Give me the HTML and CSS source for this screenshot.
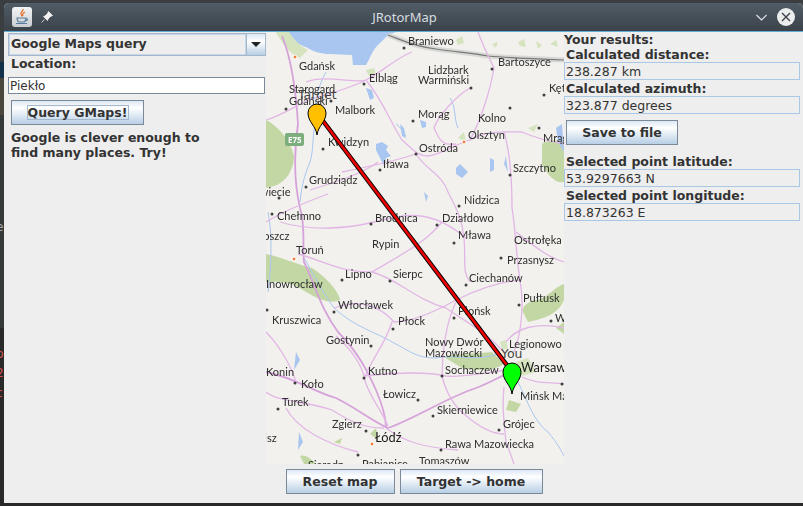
FILE: index.html
```html
<!DOCTYPE html>
<html lang="pl">
<head>
    <meta charset="UTF-8">
    <meta name="viewport" content="width=device-width, initial-scale=1.0">
    <title>JRotorMap</title>
    <link rel="stylesheet" href="styles.css">
</head>
<body>
    <div class="backdrop-text">
        <span>e</span>
        <span class="red">p</span>
        <span class="red">2</span>
        <span class="red">c</span>
    </div>
    <div class="window">
        <header class="titlebar">
            <div class="title-left">
                <span class="app-icon">
                    <svg width="20" height="20" viewBox="0 0 20 20">
                        <path d="M11 2c1 2-3 3-2 5 .5 1 1 1.500 1 2.500M13 5c-2 1-3 2-2 4" fill="none" stroke="#e2702a" stroke-width="1.300"/>
                        <path d="M5 11h9c0 2-1 3.500-2 4H7c-1-.5-2-2-2-4zM14 11.500c2 0 2 2.500-.5 2.500" fill="none" stroke="#5a7f9e" stroke-width="1.200"/>
                        <path d="M4 16.500h11" stroke="#5a7f9e" stroke-width="1.200"/>
                    </svg>
                </span>
                <svg class="pin-icon" width="12" height="12" viewBox="0 0 12 12">
                    <path d="M7.500 .5l4 4-2 1-2.500 2.500-.5 1.500-4-4 1.500-.5 2.500-2.500zM3.500 8.500L.5 11.500" fill="#f2f2f2" stroke="#f2f2f2" stroke-width=".8"/>
                </svg>
            </div>
            <div class="title-text">JRotorMap</div>
            <div class="title-right">
                <svg width="11" height="7" viewBox="0 0 11 7">
                    <path d="M.5 1l5 5 5-5" fill="none" stroke="#e6e9eb" stroke-width="1.100"/>
                </svg>
                <span class="close-btn">
                    <svg width="18" height="18" viewBox="0 0 18 18">
                        <circle cx="9" cy="9" r="9" fill="#eceded"/>
                        <path d="M5 5l8 8M13 5l-8 8" stroke="#3d444a" stroke-width="1.400"/>
                    </svg>
                </span>
            </div>
        </header>

        <main class="content">
            <section class="left-panel">
                <div class="combo">
                    <div class="combo-value">Google Maps query</div>
                    <div class="combo-arrow"><span class="arrow-down"></span></div>
                </div>
                <div class="location-label">Location:</div>
                <input class="location-input" type="text" value="Piekło">
                <button class="btn btn-query"><span class="focus-box">Query GMaps!</span></button>
                <p class="hint">Google is clever enough to<br>find many places. Try!</p>
            </section>

            <section class="map-panel">
                <div class="map">
                    <svg width="298" height="432" viewBox="0 0 298 432">
                        <g class="base">
                            <!-- areas -->
                            <path class="forest-light" d="M10 0L24 0C28 8 34 14 42 18L34 26C24 22 16 12 10 0Z"/>
                            <path class="water" d="M23 0C28 8 34 14 40 15C48 20 56 22 63 22L86 23L87 33L100 33C104 26 106 20 110 15L122 3L130 0Z"/>
                            <path class="forest" d="M0 88C12 94 24 108 28 124C28 138 20 150 8 154L0 156Z"/>
                            <path class="forest" d="M0 222C18 226 30 232 46 236C62 246 74 262 74 268C60 274 44 262 30 254C16 248 8 250 0 250Z"/>
                            <path class="forest" d="M178 325C192 320 212 322 226 320L238 332C226 340 210 338 196 336Z"/>
                            <path class="forest" d="M256 278C262 266 272 270 280 264C288 258 292 254 298 252V268C292 282 280 286 262 290Z"/>
                            <path class="forest" d="M276 112C284 106 294 108 298 112V150C290 152 282 144 276 132Z"/>
                            <path class="forest" d="M290 296L298 290V302Z"/>
                            <path class="forest" d="M243 368L255 372L250 380L240 378Z"/>
                            <path class="forest" d="M34 424C40 422 46 428 50 432H38Z"/>
                            <path class="forest" d="M68 410L76 406L74 412Z"/>
                            <path class="forest" d="M104 402L110 396L112 408Z"/>
                            <path class="forest-light" d="M226 12L232 10L230 16ZM252 10L258 7L260 15L254 14ZM270 9L276 13L272 17ZM284 12L290 8L292 15Z"/>
                            <path class="forest-light" d="M190 8L196 4L198 11L192 13ZM100 38L108 36L110 42L103 44Z"/>
                            <path class="forest-light" d="M192 106L198 100L200 110ZM262 96L272 92L268 100Z"/>
                            <path class="forest-light" d="M234 310L240 308L242 316L236 318ZM250 330L262 326L270 340L256 344Z"/>

                            <!-- border -->
                            <path class="border-wide" d="M122 3C136 8 146 14 170 17C190 20 205 21 222 24C245 26 270 27 298 28"/>
                            <path class="border-line" d="M122 3C136 8 146 14 170 17C190 20 205 21 222 24C245 26 270 27 298 28"/>

                            <!-- rivers and lakes -->
                            <path class="river" d="M60 40C52 54 48 70 50 90C46 100 48 118 44 130C40 140 36 150 34 170M2 180C6 200 6 230 2 260"/>
                            <path class="river" d="M36 222C46 240 56 260 68 276C90 296 110 300 126 310C146 320 150 326 170 326C190 322 208 330 232 322"/>
                            <path class="river" d="M252 350C262 370 268 390 282 400C292 412 296 420 298 424"/>
                            <path class="river" d="M184 66C190 74 188 88 192 96M130 92C136 96 136 100 140 104"/>
                            <path class="lake" d="M110 112L116 110L122 114L120 118L125 124L120 126L118 134L114 126L110 118Z"/>
                            <path class="lake" d="M100 56L106 58L108 66L104 68Z"/>
                            <path class="lake" d="M134 92L138 96L140 106L136 104Z"/>
                            <path class="lake" d="M154 88L160 90L160 95L156 96Z"/>
                            <path class="lake" d="M190 136L194 132L198 136L202 140L196 146L190 142Z"/>
                            <path class="lake" d="M224 126L228 128L228 138L224 140Z"/>
                            <path class="lake" d="M238 132L240 124L242 140Z"/>
                            <path class="lake" d="M158 160L162 164L160 170Z"/>
                            <path class="lake" d="M30 320L34 328L28 338Z"/>
                            <path class="lake" d="M33 400L37 410L32 418Z"/>
                            <path class="lake" d="M290 96L296 92L298 120L292 110Z"/>

                            <!-- roads -->
                            <path class="road-main" d="M16 4C26 28 30 60 32 92C28 120 28 150 34 176C40 196 36 214 38 230C50 254 54 276 72 300C92 320 102 340 110 358C116 372 120 386 120 396"/>
                            <path class="road-main" d="M0 340C30 346 48 360 70 366C90 376 108 390 122 396C150 386 180 366 210 356C226 350 238 342 246 340"/>
                            <path class="road" d="M0 88C14 84 26 76 42 68C62 62 80 58 100 48C116 40 130 26 146 20"/>
                            <path class="road" d="M40 50C60 42 90 52 100 48"/>
                            <path class="road" d="M100 48C118 70 124 90 136 108C146 116 150 124 162 124C176 122 190 112 204 108C214 90 224 60 228 36C222 24 218 16 212 0"/>
                            <path class="road" d="M204 56C190 64 172 84 168 96C174 110 178 114 190 112"/>
                            <path class="road" d="M150 122C160 138 176 142 182 160C190 176 196 186 198 206C200 230 196 240 204 250"/>
                            <path class="road" d="M204 108C220 98 242 100 256 100C274 108 288 110 298 112"/>
                            <path class="road" d="M238 100C244 120 246 150 246 176C250 200 250 224 254 248C258 270 256 300 248 320"/>
                            <path class="road" d="M76 140C96 136 126 130 150 122"/>
                            <path class="road" d="M44 158C70 150 96 142 112 130"/>
                            <path class="road" d="M0 190C20 178 40 170 62 162"/>
                            <path class="road" d="M14 190C46 200 84 196 108 190C140 182 164 176 200 206"/>
                            <path class="road" d="M176 190C160 210 140 220 106 240M250 200C270 216 284 226 298 230"/>
                            <path class="road" d="M32 222C56 228 72 240 106 240C130 246 150 268 180 276C200 290 220 300 238 320"/>
                            <path class="road" d="M68 276C90 268 110 270 128 290C146 290 172 278 190 268C210 258 230 250 254 248"/>
                            <path class="road" d="M126 290C120 310 108 324 98 346C104 366 112 372 122 394"/>
                            <path class="road" d="M70 304C86 318 94 330 98 344C130 340 164 340 180 344C200 346 224 340 240 338"/>
                            <path class="road" d="M176 344C180 360 186 372 198 382C214 396 226 402 238 402"/>
                            <path class="road" d="M0 360C12 370 36 368 66 378C82 388 96 396 118 396"/>
                            <path class="road" d="M0 300C10 310 24 330 30 350M20 376C30 396 60 412 92 420"/>
                            <path class="road" d="M190 270C180 290 176 320 176 344"/>
                            <path class="road" d="M238 355C236 376 238 390 240 410C244 420 246 426 248 432"/>
                            <path class="road" d="M120 396C138 410 160 416 192 418"/>
                            <path class="road" d="M256 345C270 352 284 350 298 352M240 310C250 296 270 290 298 296"/>

                            <!-- city dots -->
                            <g class="dots">
                                <circle cx="138" cy="16" r="1.500"/><circle cx="98" cy="52" r="1.500"/><circle cx="20" cy="77" r="1.500"/>
                                <circle cx="65" cy="69" r="1.500"/><circle cx="226" cy="37" r="1.500"/><circle cx="205" cy="56" r="1.500"/>
                                <circle cx="278" cy="63" r="1.500"/><circle cx="244" cy="76" r="1.500"/><circle cx="147" cy="89" r="1.500"/>
                                <circle cx="273" cy="96" r="1.500"/><circle cx="57" cy="117" r="1.500"/><circle cx="150" cy="122" r="1.500"/>
                                <circle cx="114" cy="138" r="1.500"/><circle cx="244" cy="143" r="1.500"/><circle cx="40" cy="155" r="1.500"/>
                                <circle cx="13" cy="166" r="1.500"/><circle cx="6" cy="182" r="1.500"/><circle cx="105" cy="192" r="1.500"/>
                                <circle cx="171" cy="193" r="1.500"/><circle cx="193" cy="174" r="1.500"/><circle cx="188" cy="211" r="1.500"/>
                                <circle cx="235" cy="226" r="1.500"/><circle cx="76" cy="248" r="1.500"/><circle cx="124" cy="249" r="1.500"/>
                                <circle cx="200" cy="253" r="1.500"/><circle cx="253" cy="273" r="1.500"/><circle cx="68" cy="280" r="1.500"/>
                                <circle cx="188" cy="286" r="1.500"/><circle cx="285" cy="289" r="1.500"/><circle cx="127" cy="297" r="1.500"/>
                                <circle cx="105" cy="314" r="1.500"/><circle cx="98" cy="346" r="1.500"/><circle cx="176" cy="344" r="1.500"/>
                                <circle cx="29" cy="351" r="1.500"/><circle cx="152" cy="368" r="1.500"/><circle cx="12" cy="377" r="1.500"/>
                                <circle cx="167" cy="384" r="1.500"/><circle cx="100" cy="399" r="1.500"/><circle cx="233" cy="398" r="1.500"/>
                                <circle cx="175" cy="418" r="1.500"/><circle cx="92" cy="423" r="1.500"/><circle cx="296" cy="352" r="1.500"/>
                                <circle cx="1" cy="278" r="1.500"/>
                            </g>
                            <circle class="capital" cx="29" cy="25" r="2"/>
                            <circle class="capital" cx="198" cy="110" r="2"/>
                            <circle class="capital" cx="28" cy="227" r="2"/>
                            <circle class="capital" cx="106" cy="412" r="2"/>

                            <!-- motorway sign -->
                            <rect class="sign" x="19" y="101" width="19" height="13" rx="2"/>
                            <text class="sign-text" x="22" y="111">E75</text>

                            <!-- place names -->
                            <g class="place">
                                <text x="142" y="13">Braniewo</text><text x="33" y="38">Gdańsk</text><text x="103" y="50">Elbląg</text>
                                <text x="162" y="42">Lidzbark</text><text x="152" y="52">Warmiński</text><text x="232" y="34">Bartoszyce</text>
                                <text x="283" y="60">Kętrzyn</text><text x="23" y="61">Starogard</text><text x="23" y="73">Gdański</text>
                                <text x="69" y="82">Malbork</text><text x="152" y="86">Morąg</text><text x="212" y="90">Kolno</text>
                                <text x="202" y="107">Olsztyn</text><text x="277" y="110">Mrągowo</text><text x="62" y="114">Kwidzyn</text>
                                <text x="153" y="120">Ostróda</text><text x="117" y="136">Iława</text><text x="247" y="140">Szczytno</text>
                                <text x="43" y="152">Grudziądz</text><text x="198" y="172">Nidzica</text><text x="-12" y="164">Świecie</text>
                                <text x="11" y="188">Chełmno</text><text x="109" y="190">Brodnica</text><text x="176" y="190">Działdowo</text>
                                <text x="192" y="207">Mława</text><text x="-27" y="208">Bydgoszcz</text><text x="248" y="212">Ostrołęka</text>
                                <text x="106" y="216">Rypin</text><text x="30" y="222">Toruń</text><text x="241" y="232">Przasnysz</text>
                                <text x="79" y="246">Lipno</text><text x="127" y="246">Sierpc</text><text x="203" y="250">Ciechanów</text>
                                <text x="0" y="256">Inowrocław</text><text x="257" y="270">Pułtusk</text><text x="72" y="277">Włocławek</text>
                                <text x="192" y="283">Płońsk</text><text x="289" y="290">Wyszków</text><text x="6" y="292">Kruszwica</text>
                                <text x="132" y="293">Płock</text><text x="60" y="312">Gostynin</text><text x="243" y="316">Legionowo</text>
                                <text x="159" y="314">Nowy Dwór</text><text x="159" y="325">Mazowiecki</text><text x="179" y="342">Sochaczew</text>
                                <text x="102" y="343">Kutno</text><text x="0" y="344">Konin</text><text x="35" y="356">Koło</text>
                                <text x="254" y="368">Mińsk Mazowiecki</text><text x="117" y="366">Łowicz</text><text x="16" y="374">Turek</text>
                                <text x="171" y="382">Skierniewice</text><text x="66" y="396">Zgierz</text><text x="237" y="396">Grójec</text>
                                <text x="-17" y="410">Kalisz</text><text x="179" y="416">Rawa Mazowiecka</text>
                                <text x="42" y="437">Sieradz</text><text x="96" y="436">Pabianice</text><text x="153" y="433">Tomaszów</text>
                            </g>
                            <text class="place-big" x="255" y="340">Warsaw</text>
                            <text class="place-big" x="109" y="410">Łódź</text>
                        </g>

                        <!-- path between the markers -->
                        <line class="path-outer" x1="51" y1="81" x2="246" y2="340"/>
                        <line class="path-inner" x1="51" y1="81" x2="246" y2="340"/>

                        <text class="marker-label" x="32" y="67">Target</text>
                        <text class="marker-label" x="235" y="326">You</text>

                        <path class="pin pin-target" d="M51 103C50 94 42 90 42 81A9 9 0 0 1 60 81C60 90 52 94 51 103Z"/>
                        <path class="pin pin-home" d="M246 362C245 353 237 349 237 340A9 9 0 0 1 255 340C255 349 247 353 246 362Z"/>
                    </svg>
                </div>
                <div class="map-buttons">
                    <button class="btn btn-reset">Reset map</button>
                    <button class="btn btn-home">Target -&gt; home</button>
                </div>
            </section>

            <section class="right-panel">
                <div class="results-title">Your results:</div>
                <div class="field-label">Calculated distance:</div>
                <div class="field">238.287 km</div>
                <div class="field-label">Calculated azimuth:</div>
                <div class="field">323.877 degrees</div>
                <button class="btn btn-save">Save to file</button>
                <div class="field-label low">Selected point latitude:</div>
                <div class="field">53.9297663 N</div>
                <div class="field-label low">Selected point longitude:</div>
                <div class="field">18.873263 E</div>
            </section>
        </main>
    </div>
</body>
</html>
```
FILE: styles.css
```css
html, body {
    margin: 0;
    padding: 0;
    height: 100%;
    overflow: hidden;
}

body {
    background: linear-gradient(to bottom,
        #3a3e40 0, #3a3e40 62px,
        #12304a 62px, #12304a 78px,
        #4a463c 78px, #4a463c 115px,
        #35393a 115px, #35393a 328px,
        #292929 328px);
    font-family: "DejaVu Sans", sans-serif;
    color: #333;
    position: relative;
}

/* bits of the windows behind, only a sliver shows */
.backdrop-text {
    position: absolute;
    left: -4px;
    top: 220px;
    width: 9px;
    font-size: 12px;
    color: #a9adb0;
}

.backdrop-text span {
    position: absolute;
    left: 0;
    top: 0;
}

.backdrop-text .red {
    color: #d9534f;
}

.backdrop-text .red:nth-child(2) {
    top: 127px;
}

.backdrop-text .red:nth-child(3) {
    top: 146px;
}

.backdrop-text .red:nth-child(4) {
    top: 166px;
}

.window {
    position: relative;
    width: 799px;
    height: 500px;
    margin: 3px 0 0 4px;
    padding-top: 0;
    background-color: #eeeeee;
    border-radius: 5px 5px 0 0;
    overflow: hidden;
}

.titlebar {
    height: 28px;
    display: flex;
    align-items: center;
    justify-content: space-between;
    background: linear-gradient(to bottom, #505c66, #3c434a);
    border-bottom: 1px solid #62a9d6;
}

.title-left {
    display: flex;
    align-items: center;
    gap: 9px;
    padding-left: 8px;
}

.app-icon {
    width: 20px;
    height: 20px;
    display: block;
    background: linear-gradient(to bottom, #f4f4f4, #c9ced2);
    border-radius: 3px;
}

.title-text {
    font-family: "Noto Sans", sans-serif;
    font-size: 13px;
    color: #d9dde0;
}

.title-right {
    display: flex;
    align-items: center;
    gap: 10px;
    padding-right: 8px;
}

.title-right svg, .pin-icon, .app-icon svg {
    display: block;
}

.content {
    display: grid;
    grid-template-columns: 262px 298px 239px;
    height: 471px;
}

.left-panel {
    padding: 1px 0 0 4px;
}

.combo {
    display: flex;
    height: 23px;
    width: 258px;
}

.combo-value {
    flex: 1;
    border: 1px solid #a3b8cc;
    box-shadow: inset 0 0 0 1px #c6d6e6;
    padding-left: 2px;
    font-size: 12.500px;
    font-weight: bold;
    line-height: 20px;
}

.combo-arrow {
    width: 19px;
    display: flex;
    align-items: center;
    justify-content: center;
    background: linear-gradient(to bottom, #dde8f3, #ffffff 35%, #b8cfe5);
    border: 1px solid #a3b8cc;
    border-left: none;
    box-sizing: border-box;
}

.arrow-down {
    width: 0;
    height: 0;
    border-left: 5px solid transparent;
    border-right: 5px solid transparent;
    border-top: 5px solid #222;
}

.location-label {
    padding-left: 3px;
    font-size: 12.500px;
    font-weight: bold;
    line-height: 16px;
}

.location-input {
    display: block;
    box-sizing: border-box;
    width: 257px;
    height: 17px;
    margin-top: 5px;
    padding: 0 1px;
    border: 1px solid #7a8a99;
    background: #fff;
    font-family: "DejaVu Sans", sans-serif;
    font-size: 12px;
    color: #333;
    outline: none;
}

.btn {
    display: block;
    box-sizing: border-box;
    padding: 0;
    height: 25px;
    border: 1px solid #7a8a99;
    background: linear-gradient(to bottom, #dde8f3, #ffffff 30%, #b8cfe5);
    font-family: "DejaVu Sans", sans-serif;
    font-size: 12.500px;
    font-weight: bold;
    color: #333;
    text-align: center;
    white-space: nowrap;
}

.btn-query {
    width: 133px;
    margin: 6px 0 0 3px;
}

.focus-box {
    display: inline-block;
    width: 100px;
    border: 1px solid #a3b8cc;
    line-height: 13px;
}

.hint {
    margin: 5px 0 0 3px;
    font-size: 12.500px;
    font-weight: bold;
    line-height: 15px;
}

.map-panel {
    display: flex;
    flex-direction: column;
}

.map {
    width: 298px;
    height: 432px;
    overflow: hidden;
    background-color: #f2f1ed;
}

.map svg {
    display: block;
}

.map-buttons {
    display: flex;
    justify-content: center;
    gap: 5px;
    margin: 5px 2px 0 0;
}

.btn-reset {
    width: 109px;
}

.btn-home {
    width: 143px;
}

.results-title {
    padding-top: 1px;
    font-size: 12.500px;
    font-weight: bold;
    line-height: 13px;
}

.field-label {
    margin: 1px 0 0 2px;
    font-size: 12.500px;
    font-weight: bold;
    line-height: 15px;
}

.field-label.low {
    padding-top: 1px;
    line-height: 14px;
}

.field {
    box-sizing: border-box;
    width: 236px;
    height: 18px;
    border: 1px solid #a9c8e6;
    padding-left: 1px;
    font-size: 12.500px;
    line-height: 17px;
}

.btn-save {
    width: 112px;
    margin: 6px 0 9px 2px;
}

/* map */
.base {
    filter: blur(0.3px);
}

.water, .lake {
    fill: #a8c6f0;
}

.forest {
    fill: #c3d7a4;
}

.forest-light {
    fill: #d6e3bf;
}

.river {
    fill: none;
    stroke: #a8c6f0;
    stroke-width: 1;
}

.road {
    fill: none;
    stroke: #e2b6e6;
    stroke-width: 1.300;
}

.road-main {
    fill: none;
    stroke: #d6a2da;
    stroke-width: 1.800;
}

.border-wide {
    fill: none;
    stroke: #d8d8d4;
    stroke-width: 5;
}

.border-line {
    fill: none;
    stroke: #77787a;
    stroke-width: 1.200;
}

.dots {
    fill: #3f3f3f;
}

.capital {
    fill: #f2803c;
    stroke: #fff;
    stroke-width: 1;
}

.sign {
    fill: #7cad7c;
}

.sign-text {
    font-family: "Open Sans", sans-serif;
    font-size: 8px;
    font-weight: bold;
    fill: #fff;
}

.place {
    font-family: "Lato", sans-serif;
    font-size: 11px;
    fill: #2e2e2e;
}

.place-big {
    font-family: "Lato", sans-serif;
    font-size: 12.800px;
    fill: #1a1a1a;
}

.marker-label {
    font-family: "DejaVu Sans", sans-serif;
    font-size: 12.500px;
    fill: #444;
}

.path-outer {
    stroke: #000;
    stroke-width: 4.500;
}

.path-inner {
    stroke: #ee0000;
    stroke-width: 2.600;
}

.pin {
    stroke: #000;
    stroke-width: 1;
}

.pin-target {
    fill: #ffc000;
}

.pin-home {
    fill: #00ff00;
}
```
